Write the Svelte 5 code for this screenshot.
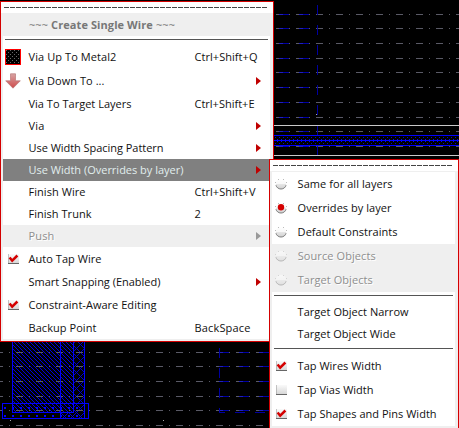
<script>
  const main = [
    { label: 'Via Up To Metal2', w: 87, key: 'Ctrl+Shift+Q', kw: 62, h: 24, icon: 'via' },
    { label: 'Via Down To ...', w: 75, h: 24, icon: 'down', sub: true },
    { label: 'Via To Target Layers', w: 102, key: 'Ctrl+Shift+E', kw: 59, h: 22 },
    { label: 'Via', w: 15, h: 22, sub: true },
    { label: 'Use Width Spacing Pattern', w: 134, h: 22, sub: true },
    { label: 'Use Width (Overrides by layer)', w: 154, h: 22, sub: true, active: true },
    { label: 'Finish Wire', w: 56, key: 'Ctrl+Shift+V', kw: 60, h: 22 },
    { label: 'Finish Trunk', w: 62, key: '2', kw: 6, h: 22 },
    { label: 'Push', w: 25, h: 22, sub: true, off: true },
    { label: 'Auto Tap Wire', w: 72, h: 23, icon: 'checked' },
    { label: 'Smart Snapping (Enabled)', w: 131, h: 23, sub: true },
    { label: 'Constraint-Aware Editing', w: 127, h: 23, icon: 'checked' },
    { label: 'Backup Point', w: 67, key: 'BackSpace', kw: 55, h: 23 },
  ];
  const side = [
    { label: 'Same for all layers', w: 94, h: 24, icon: 'radio' },
    { label: 'Overrides by layer', w: 93, h: 24, icon: 'radioOn' },
    { label: 'Default Constraints', w: 99, h: 24, icon: 'radio' },
    { label: 'Source Objects', w: 77, h: 24, icon: 'radio', off: true },
    { label: 'Target Objects', w: 74, h: 24, icon: 'radio', off: true },
    { sep: true },
    { label: 'Target Object Narrow', w: 110, h: 22 },
    { label: 'Target Object Wide', w: 97, h: 22 },
    { sep: true },
    { label: 'Tap Wires Width', w: 83, h: 24, icon: 'checked' },
    { label: 'Tap Vias Width', w: 75, h: 24, icon: 'box' },
    { label: 'Tap Shapes and Pins Width', w: 138, h: 24, icon: 'checked' },
  ];
  const gridRows = [14, 28, 43, 58, 72, 87, 102, 117, 131, 146, 352, 366, 381, 396, 410, 425];

  // Spreads a label over its column width by adjusting the tracking.
  function fit(node, width) {
    const natural = node.getBoundingClientRect().width;
    node.style.letterSpacing = (width + 1 - natural) / node.textContent.length + 'px';
  }
</script>

{#snippet icon(name)}
  {#if name === 'via'}
    <svg width="16" height="16" shape-rendering="crispEdges">
      <rect width="16" height="16" fill="#000" />
      <rect width="16" height="16" fill="url(#viaDots)" />
      <rect x=".5" y=".5" width="15" height="15" fill="none" stroke="#f00" />
    </svg>
  {:else if name === 'down'}
    <svg width="16" height="16">
      <path d="M5.5 .8h5v7h4.8L8 15.2.7 7.8h4.8z" fill="url(#arrowFill)" stroke="#b87878" stroke-width=".7" />
    </svg>
  {:else if name === 'checked' || name === 'box'}
    <svg width="12" height="12">
      <rect x="1" y="1" width="11" height="10" fill="url(#boxFill)" />
      <path d="M1.5 1v10M1 10.5h11" stroke="#999" fill="none" opacity=".55" />
      <path d="M1 10.5h11" stroke="#666" />
      {#if name === 'checked'}
        <path d="M2.6 4.4 5.2 7.7 10.4 2.5" fill="none" stroke="#d40000" stroke-width="2.5" />
      {/if}
    </svg>
  {:else}
    <svg width="12" height="12">
      <circle cx="6" cy="6" r="5.2" fill="url(#radioFill)" />
      <path d="M.9 7.2C1.6 9.6 3.6 11 6 11s4.4-1.4 5.1-3.8" fill="none" stroke="#777" stroke-width=".9" />
      <path d="M0 4.5h1M11 4.5h1M3 1.5h1M8 1.5h1" stroke="#bbb" />
      {#if name === 'radioOn'}
        <circle cx="6" cy="5.3" r="3.2" fill="#d40000" />
      {/if}
    </svg>
  {/if}
{/snippet}

{#snippet row(item)}
  {#if item.sep}
    <div class="sep"></div>
  {:else}
    <div class="row" class:active={item.active} class:off={item.off} style:height="{item.h}px">
      <span class="icon">{#if item.icon}{@render icon(item.icon)}{/if}</span>
      <span class="label"><span use:fit={item.w}>{item.label}</span></span>
      {#if item.key}<span class="key"><span use:fit={item.kw}>{item.key}</span></span>{/if}
      {#if item.sub}
        <svg class="arrow" width="5" height="8"><path d="M0 0 5 4 0 8z" fill={item.off ? '#999' : '#c00000'} /></svg>
      {/if}
    </div>
  {/if}
{/snippet}

<div class="screen">
  <svg class="canvas" width="459" height="428" shape-rendering="crispEdges">
    <defs>
      <pattern id="viaDots" width="4" height="4" patternUnits="userSpaceOnUse">
        <path d="M1 1h1v1H1zM3 3h1v1H3z" fill="#686868" />
      </pattern>
      <pattern id="dense" width="4" height="4" patternUnits="userSpaceOnUse">
        <path d="M0 0h1v1H0zM1 1h1v1H1zM2 2h1v1H2zM3 3h1v1H3z" fill="#0000e0" />
      </pattern>
      <pattern id="cross" width="8" height="8" patternUnits="userSpaceOnUse">
        <path d="M0 0h1v1H0zM1 1h1v1H1zM2 2h1v1H2zM3 3h1v1H3zM4 4h1v1H4zM5 5h1v1H5zM6 6h1v1H6zM7 7h1v1H7zM7 1h1v1H7zM6 2h1v1H6zM5 3h1v1H5zM3 5h1v1H3zM2 6h1v1H2zM1 7h1v1H1z" fill="#0000d0" />
      </pattern>
      <linearGradient id="arrowFill" x2="0" y2="1"><stop stop-color="#d8a4a4" /><stop offset="1" stop-color="#cf4b4b" /></linearGradient>
      <linearGradient id="boxFill" x2="0" y2="1"><stop stop-color="#fafafa" /><stop offset="1" stop-color="#d4d4d4" /></linearGradient>
      <linearGradient id="radioFill" x2="0" y2="1"><stop stop-color="#fff" /><stop offset=".5" stop-color="#f8f8f8" /><stop offset=".55" stop-color="#e4e4e4" /><stop offset="1" stop-color="#d0d0d0" /></linearGradient>
    </defs>
    <rect width="459" height="428" fill="#000" />
    <rect x="12" y="342" width="62" height="70" fill="url(#dense)" />
    <rect x="74" y="342" width="11" height="76" fill="url(#cross)" />
    <rect x="61" y="412" width="13" height="6" fill="url(#cross)" />
    {#each gridRows as y}
      <path d="M-4 {y + 0.5}H459" stroke="#5a5a66" stroke-dasharray="7 6 1 6" />
    {/each}
    {#each gridRows.slice(0, 10) as y}
      <path d="M279 {y + 0.5}H310" stroke="#0000a4" stroke-dasharray="10 10" />
      <path d="M279 {y + 0.5}H310" stroke="#2020c0" stroke-dasharray="4 16" />
    {/each}
    {#each gridRows.slice(10, 15) as y}
      <path d="M219 {y + 0.5}H270" stroke="#0000a4" stroke-dasharray="10 10" />
      <path d="M219 {y + 0.5}H270" stroke="#2020c0" stroke-dasharray="4 16" />
    {/each}
    <path d="M317.5 5V155" stroke="#0000a0" stroke-dasharray="10 10" />
    <path d="M219.5 348V413" stroke="#0000a0" stroke-dasharray="10 10" />
    <path d="M219 412.5h6m10 0h10m10 0h10" stroke="#0000a0" />
    <path d="M274 125.5H459M274 155.5H459" stroke="#c8c8c8" />
    <path d="M274 135.5H459M274 140.5H459M274 145.5H459" stroke="#00f" />
    <path d="M275 137.5H459M275 143.5H459" stroke="#0000d0" stroke-dasharray="1 3" />
    <path d="M277 139.5H459M277 141.5H459" stroke="#00f" stroke-dasharray="1 3" />
    <path d="M12.5 342V412.5H73.5V342M60.5 342V418M84.5 342V418M2.5 403.5H88.5V418.5H2.5z" fill="none" stroke="#00f" />
    <path d="M4 408H84M4 416H84" stroke="#00f" stroke-width="2" stroke-dasharray="2 6" />
    <path d="M316 114h1v1h-1zM10 420h1v1h-1zM163 420h1v1h-1z" fill="#aaa" />
  </svg>

  <div class="menu main">
    <div class="tear"></div>
    <div class="body">
      <div class="title"><span use:fit={145}>~~~ <b>Create Single Wire</b> ~~~</span></div>
      <div class="sep"></div>
      {#each main as item}{@render row(item)}{/each}
    </div>
  </div>

  <div class="menu side">
    <div class="tear"></div>
    <div class="body">
      {#each side as item}{@render row(item)}{/each}
    </div>
  </div>
</div>

<style>
  .screen {
    position: relative;
    width: 459px;
    height: 428px;
    overflow: hidden;
    background: #000;
    font: 11px/16px 'Open Sans', 'Noto Sans', sans-serif;
    color: #111;
  }
  .canvas { display: block; }
  .menu {
    position: absolute;
    box-sizing: border-box;
    border: 1px solid #d40000;
    background: #efefef;
  }
  .main { left: 0; top: 1px; width: 274px; height: 341px; }
  .side { left: 269px; top: 159px; width: 190px; height: 271px; }
  .tear {
    height: 11px;
    background: repeating-linear-gradient(90deg, #444 0 5px, #fff 5px 6px) 3px 5px / 264px 1px no-repeat #fff;
  }
  .side .tear { background-size: 180px 1px; margin-bottom: 1px; }
  .body { margin: 0 3px 0 2px; background: #fff; }
  .title {
    height: 23px;
    line-height: 23px;
    padding-left: 26px;
    margin-right: -1px;
    background: #efefef;
    color: #777;
  }
  .sep {
    height: 9px;
    background: linear-gradient(#555, #555) 2px 3px / calc(100% - 4px) 1px no-repeat;
  }
  .row { display: flex; align-items: center; white-space: pre; }
  .icon { width: 25.5px; display: flex; }
  .side .icon { width: 27px; }
  .icon svg { margin: 0 auto 0 3px; }
  .main .icon svg { margin-left: 2px; }
  .main .icon svg[width='12'] { margin-left: 4px; }
  .label { width: 166px; }
  .key { width: 70px; }
  .arrow { margin-left: 61px; }
  .active { background: #808080; color: #e0eeee; }
  .off { background: #efefef; color: #8e8e8e; text-shadow: 1px 1px #fff; margin-right: -1px; }
  .off .icon { opacity: .5; }
</style>
